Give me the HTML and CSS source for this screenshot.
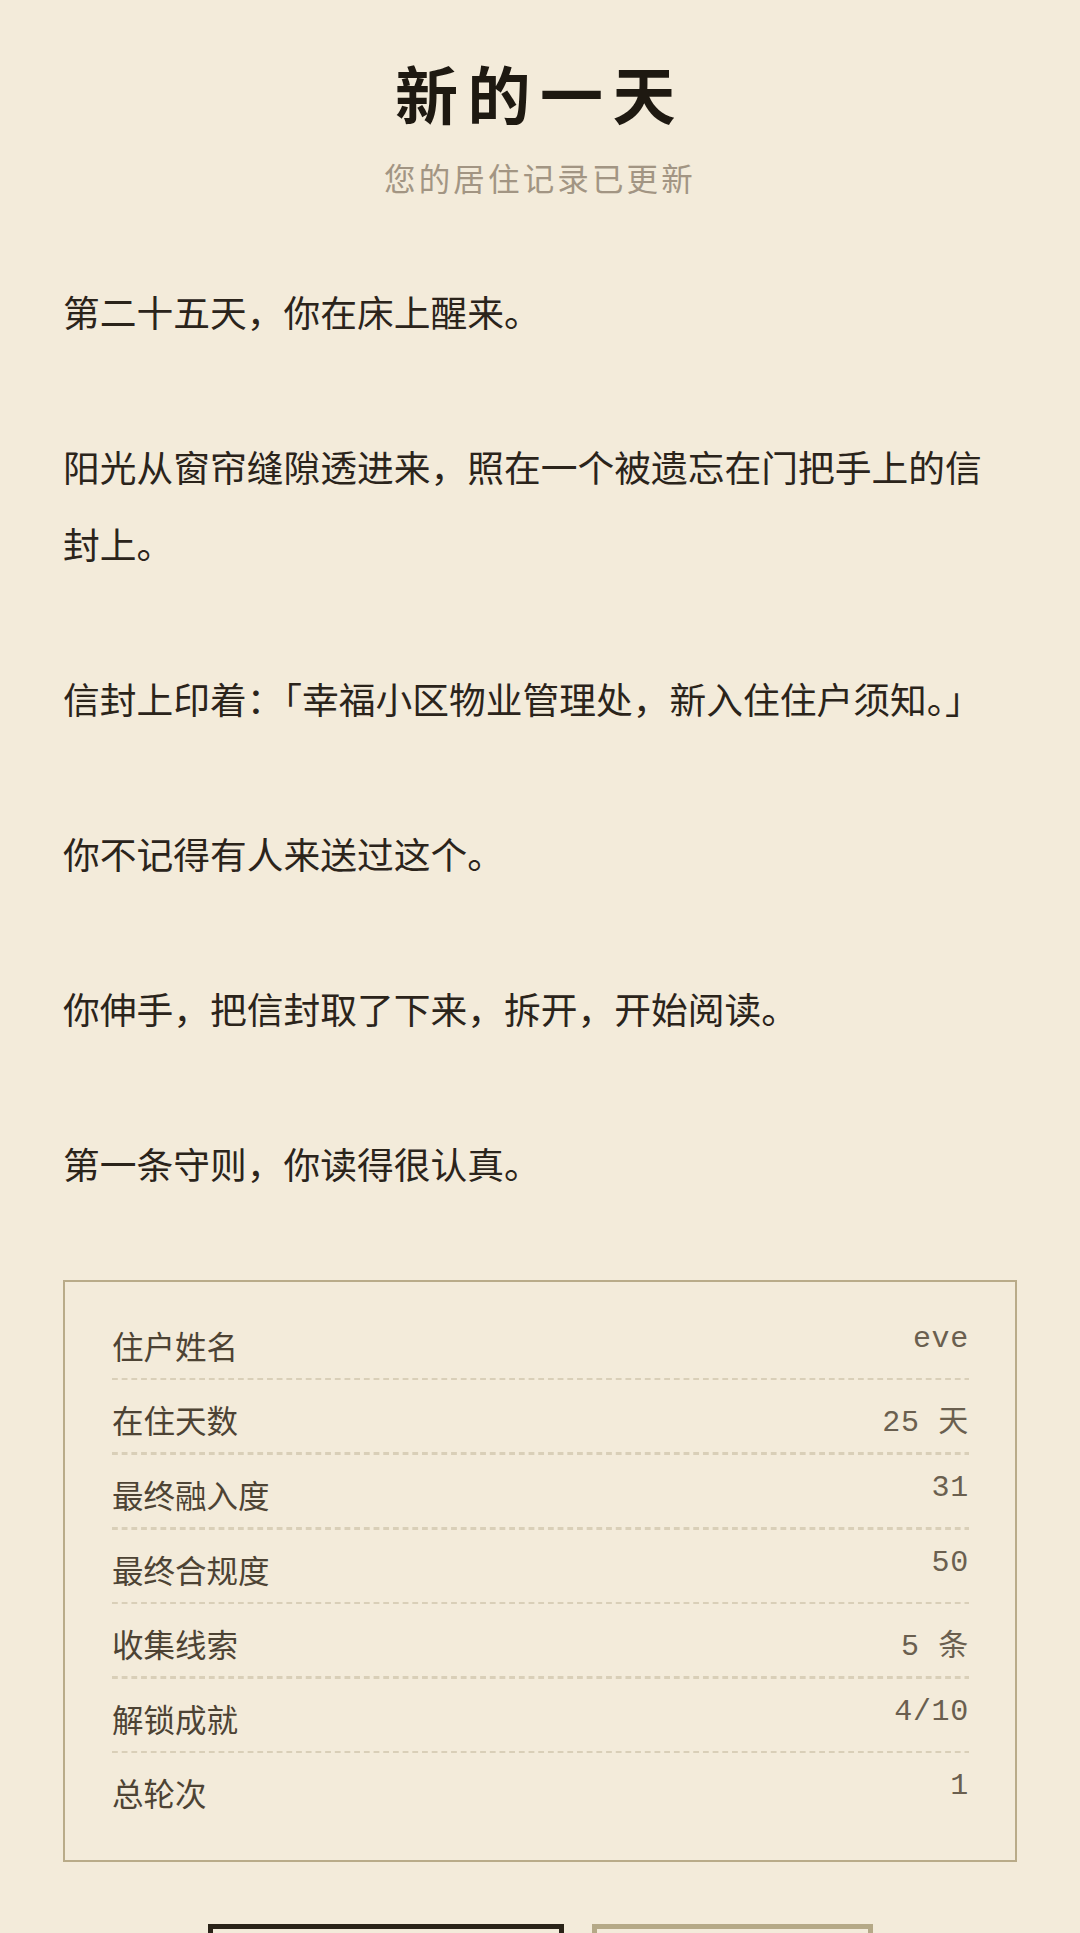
FILE: index.html
```html
<!DOCTYPE html>
<html lang="zh-CN">
<head>
<meta charset="utf-8">
<title>新的一天</title>
<link rel="stylesheet" href="styles.css">
</head>
<body>
<main class="page">
  <header class="hero">
    <h1 class="title">新的一天</h1>
    <p class="subtitle">您的居住记录已更新</p>
  </header>

  <section class="story">
    <p>第二十五天，你在床上醒来。</p>
    <p>阳光从窗帘缝隙透进来，照在一个被遗忘在门把手上的信封上。</p>
    <p>信封上印着：「幸福小区物业管理处，新入住住户须知。」</p>
    <p>你不记得有人来送过这个。</p>
    <p>你伸手，把信封取了下来，拆开，开始阅读。</p>
    <p>第一条守则，你读得很认真。</p>
  </section>

  <section class="record">
    <div class="row"><span class="label">住户姓名</span><span class="value">eve</span></div>
    <div class="row"><span class="label">在住天数</span><span class="value">25 天</span></div>
    <div class="row"><span class="label">最终融入度</span><span class="value">31</span></div>
    <div class="row"><span class="label">最终合规度</span><span class="value">50</span></div>
    <div class="row"><span class="label">收集线索</span><span class="value">5 条</span></div>
    <div class="row"><span class="label">解锁成就</span><span class="value">4/10</span></div>
    <div class="row"><span class="label">总轮次</span><span class="value">1</span></div>
  </section>

  <div class="actions">
    <button class="btn btn-primary">继续新的一天</button>
    <button class="btn btn-secondary">返回</button>
  </div>
</main>
</body>
</html>
```
FILE: styles.css
```css
html, body {
  margin: 0;
  padding: 0;
}

body {
  background: #f3ebda;
  font-family: "Noto Sans CJK SC", "Noto Sans", sans-serif;
  color: #2b241b;
}

.page {
  padding: 54px 63px 80px;
}

.hero {
  text-align: center;
}

.title {
  margin: 0;
  font-size: 63px;
  line-height: 75.6px;
  font-weight: 700;
  letter-spacing: 0.15em;
  color: #1e1911;
}

.subtitle {
  margin: 24px 0 0;
  font-size: 31.5px;
  line-height: 47px;
  letter-spacing: 0.1em;
  color: #a29583;
}

.story {
  margin-top: 72px;
}

.story p {
  margin: 0 0 77.8px;
  font-size: 36.75px;
  line-height: 77.2px;
  color: #2b241b;
}

.record {
  border: 2.6px solid #b9ab89;
  padding: 24px 46px 35px 47px;
}

.row {
  display: flex;
  justify-content: space-between;
  align-items: flex-start;
  padding: 16px 0 12.6px;
  background-image: linear-gradient(to right, #d9cfb8 62%, transparent 62%);
  background-size: 9.7px 2.6px;
  background-repeat: repeat-x;
  background-position: left bottom;
}

.row:last-child {
  background: none;
  padding-bottom: 10px;
}

.label {
  font-size: 31.5px;
  line-height: normal;
  color: #4d4334;
}

.value {
  font-family: "Liberation Mono", "Noto Sans CJK SC", monospace;
  font-size: 30px;
  letter-spacing: 0.7px;
  line-height: normal;
  color: #6a5f4f;
}

.actions {
  margin-top: 62px;
  display: flex;
  justify-content: center;
  gap: 28px;
}

.btn {
  background: transparent;
  font-family: "Noto Sans CJK SC", sans-serif;
  font-size: 36.75px;
  padding: 30px 0;
}

.btn-primary {
  width: 356px;
  border: 5px solid #2a2318;
  color: #2a2318;
}

.btn-secondary {
  width: 281px;
  border: 5px solid #b5a987;
  color: #7a6d55;
}
```
